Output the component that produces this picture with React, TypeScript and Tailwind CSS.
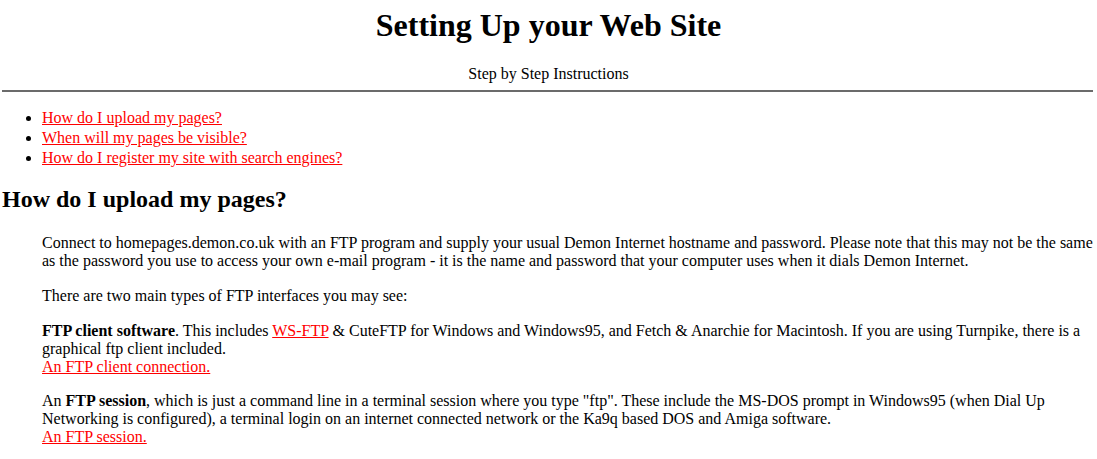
import React from 'react';

const topics = [
    'How do I upload my pages?',
    'When will my pages be visible?',
    'How do I register my site with search engines?',
];

const RedLink = ({ children }: { children: React.ReactNode }) => (
    <a href="#" className="text-[#ff0000] underline">{children}</a>
);

const App: React.FC = () => {
    return (
        <div className="bg-white text-black px-[2px] min-h-[459px] font-['Liberation_Serif','Times_New_Roman',serif] text-[16px] leading-[18px]">
            <h1 className="pt-[7px] text-center text-[32px] font-bold leading-[normal]">Setting Up your Web Site</h1>
            <p className="mt-[21px] text-center leading-[normal]">Step by Step Instructions</p>
            <hr className="mt-[7px] mr-[2px] h-[2px] border-0 bg-[#6b6b6b]" />

            {/* table of contents */}
            <ul className="mt-[16px] list-disc pl-[40px] leading-[20px]">
                {topics.map(t => (
                    <li key={t}><RedLink>{t}</RedLink></li>
                ))}
            </ul>

            <h2 className="mt-[18px] text-[24px] font-bold leading-[normal]">How do I upload my pages?</h2>

            <div className="ml-[40px] mr-[2px]">
                <p className="mt-[21px]">
                    Connect to homepages.demon.co.uk with an FTP program and supply your usual Demon Internet hostname and password. Please note that this may not be the same as the password you use to access your own e-mail program - it is the name and password that your computer uses when it dials Demon Internet.
                </p>
                <p className="mt-[17px]">There are two main types of FTP interfaces you may see:</p>
                <p className="mt-[17px]">
                    <b>FTP client software</b>. This includes <RedLink>WS-FTP</RedLink> &amp; CuteFTP for Windows and Windows95, and Fetch &amp; Anarchie for Macintosh. If you are using Turnpike, there is a graphical ftp client included.
                    <br />
                    <RedLink>An FTP client connection.</RedLink>
                </p>
                <p className="mt-[16px]">
                    An <b>FTP session</b>, which is just a command line in a terminal session where you type "ftp". These include the MS-DOS prompt in Windows95 (when Dial Up Networking is configured), a terminal login on an internet connected network or the Ka9q based DOS and Amiga software.
                    <br />
                    <RedLink>An FTP session.</RedLink>
                </p>
            </div>
        </div>
    );
};

export default App;
